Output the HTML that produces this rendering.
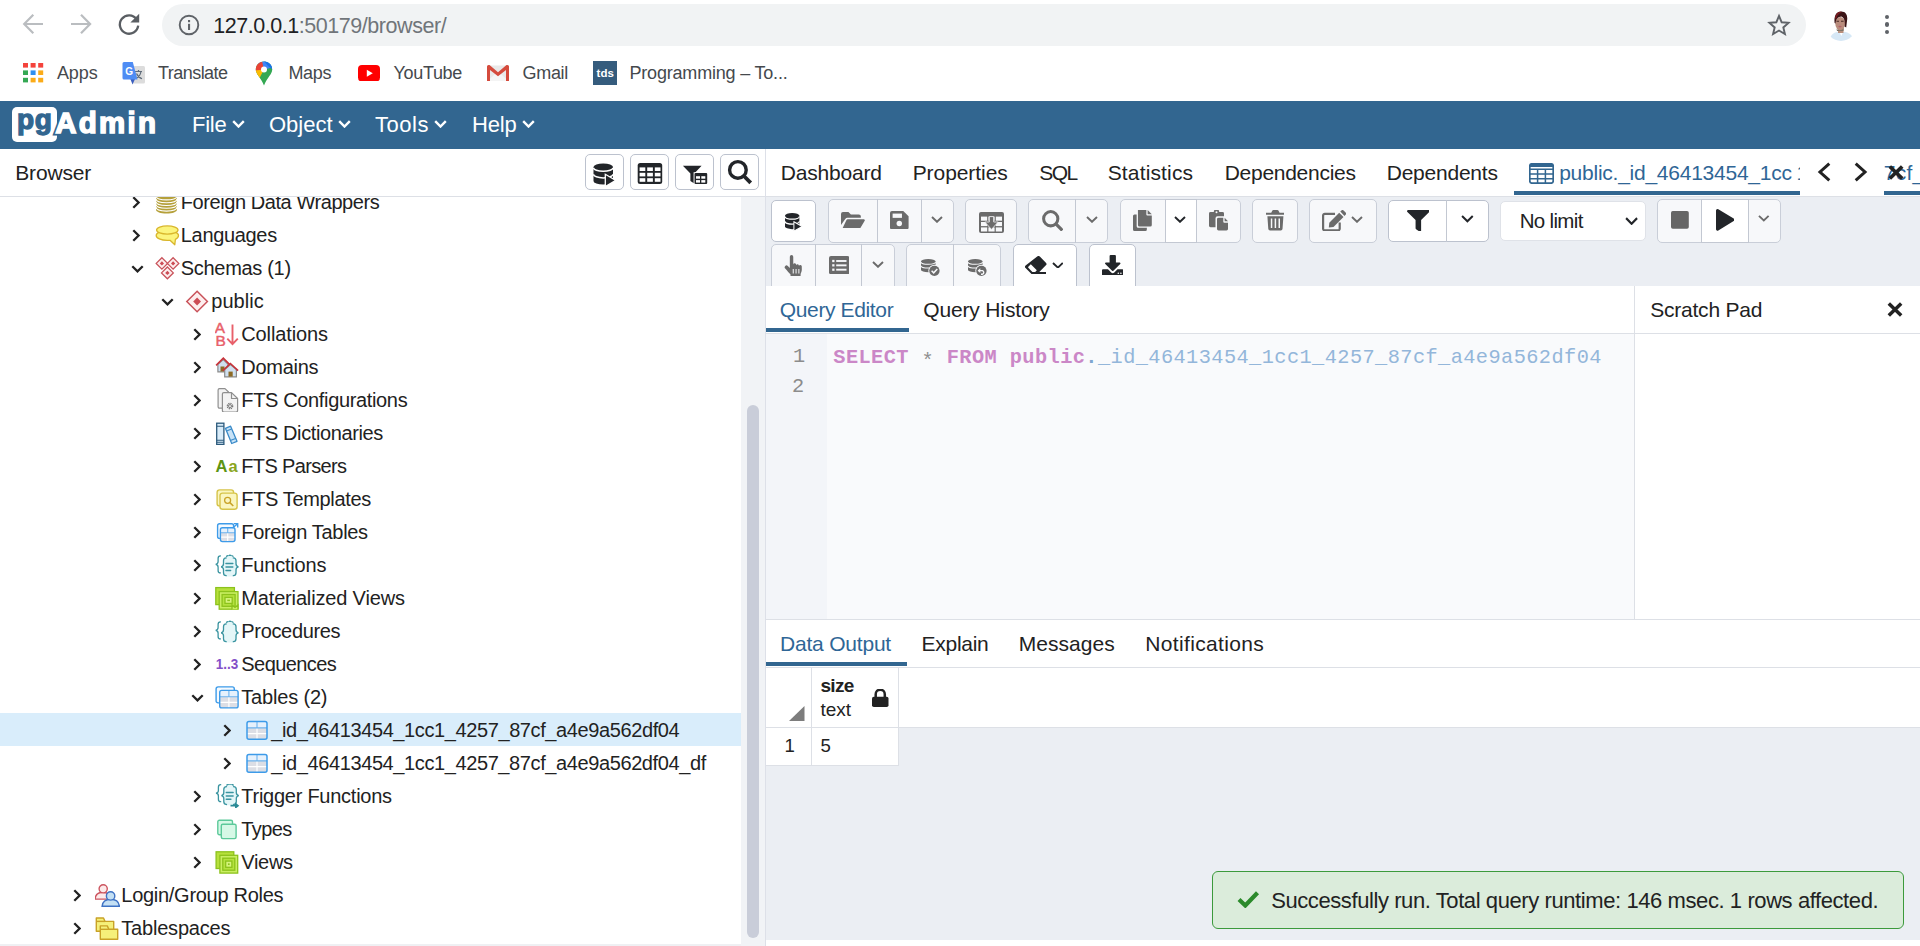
<!DOCTYPE html>
<html lang="en"><head><meta charset="utf-8"><title>pgAdmin 4</title>
<style>
html,body{margin:0;padding:0;background:#fff;}
body{width:1920px;height:946px;position:relative;overflow:hidden;font-family:"Liberation Sans",Arial,sans-serif;}
div,span.t,svg{position:absolute;box-sizing:border-box;}
span.t{white-space:pre;}
.btn{border:1px solid #bcc2ce;border-radius:5px;background:#fff;}
.dis{background:#f7f8fa;border-color:#c9ced8;}
</style></head>
<body>
<svg style="left:21px;top:12.3px;" width="24" height="24" viewBox="0 0 24 24"><path d="M22 12H4M12.300 2.800L3.200 12L12.300 21.200" fill="none" stroke="#babdc0" stroke-width="2.2"/></svg>
<svg style="left:68px;top:12.3px;" width="24" height="24" viewBox="0 0 24 24"><path d="M3 12H21.300M13 2.800L22.100 12L13 21.200" fill="none" stroke="#babdc0" stroke-width="2.2"/></svg>
<svg style="left:116.4px;top:11.2px;" width="26" height="26" viewBox="0 0 26 26"><path d="M20.6 8.2A9.2 9.2 0 1 0 22.2 14.6" fill="none" stroke="#5a5e63" stroke-width="2.3"/><path d="M23.200 2.800V11.600H14.400Z" fill="#5a5e63"/></svg>
<div style="left:162px;top:4px;width:1644px;height:42px;background:#f1f3f4;border-radius:21px;"></div>
<svg style="left:178px;top:14px;" width="22" height="22" viewBox="0 0 22 22"><circle cx="11" cy="11" r="9.3" fill="none" stroke="#5f6368" stroke-width="1.9"/><rect x="10" y="9.8" width="2.1" height="6.2" fill="#5f6368"/><rect x="10" y="6" width="2.1" height="2.2" fill="#5f6368"/></svg>
<span class="t" style="left:213.2px;top:11.55px;font-size:21.5px;line-height:28px;color:#70757a;font-weight:normal;font-family:'Liberation Sans', Arial, sans-serif;letter-spacing:-0.452px;"><span style="color:#202124">127.0.0.1</span>:50179/browser/</span>
<svg style="left:1767px;top:12.9px;" width="24" height="24" viewBox="0 0 26 26"><path d="M13 3.2L15.9 10.1L23.3 10.7L17.7 15.6L19.4 22.8L13 19L6.6 22.8L8.3 15.6L2.7 10.7L10.1 10.1Z" fill="none" stroke="#5f6368" stroke-width="2.1" stroke-linejoin="miter"/></svg>
<svg style="left:1826px;top:10px;" width="30" height="32" viewBox="0 0 30 32"><defs><clipPath id="av"><circle cx="15" cy="16" r="15"/></clipPath></defs><g clip-path="url(#av)"><rect width="30" height="32" fill="#fff"/><path d="M3 32C4 24 9 21.5 15 21.5S27 24 28.500 32Z" fill="#d6e8f6"/><path d="M13 21L15.300 26L17.500 21Z" fill="#fff"/><rect x="12" y="17" width="5.5" height="6" fill="#b98f7c"/><ellipse cx="14.2" cy="13.5" rx="4.9" ry="6.6" fill="#b98c7c"/><path d="M10.500 11.200H13M15 11.200H17.600" stroke="#4a2a26" stroke-width="1.100"/><ellipse cx="14" cy="16.600" rx="1.700" ry="0.800" fill="#b0606a"/><path d="M10.500 18.500C12 20.800 16 20.800 17.800 18L17.500 21H11Z" fill="#7d7468"/><path d="M8.6 13C7.500 4 12 0.800 15.500 1.500C20 1.500 22 5.500 21 11L20.200 17.500L18.600 16.500C19.500 11 18 7.500 15.500 6.500C12 7 10 8.500 9.600 13.500Z" fill="#3a1416"/><path d="M9 8C10 3 13 1.200 16 2C13.500 3 11 5 10.200 9Z" fill="#7a1c22"/></g></svg>
<div style="left:1884.6px;top:14.599999999999998px;width:4.6px;height:4.6px;background:#5f6368;border-radius:50%;"></div>
<div style="left:1884.6px;top:22.3px;width:4.6px;height:4.6px;background:#5f6368;border-radius:50%;"></div>
<div style="left:1884.6px;top:29.900000000000002px;width:4.6px;height:4.6px;background:#5f6368;border-radius:50%;"></div>
<svg style="left:23px;top:62.5px;" width="21" height="20" viewBox="0 0 21 20"><rect x="0.0" y="0.0" width="5" height="4.6" fill="#f4433c"/><rect x="7.6" y="0.0" width="5" height="4.6" fill="#f4433c"/><rect x="15.2" y="0.0" width="5" height="4.6" fill="#f4433c"/><rect x="0.0" y="7.4" width="5" height="4.6" fill="#34a853"/><rect x="7.6" y="7.4" width="5" height="4.6" fill="#2f8ff0"/><rect x="15.2" y="7.4" width="5" height="4.6" fill="#fbab18"/><rect x="0.0" y="14.8" width="5" height="4.6" fill="#34a853"/><rect x="7.6" y="14.8" width="5" height="4.6" fill="#fbab18"/><rect x="15.2" y="14.8" width="5" height="4.6" fill="#fbab18"/></svg>
<span class="t" style="left:57px;top:61.56px;font-size:18px;line-height:23px;color:#45494d;font-weight:normal;font-family:'Liberation Sans', Arial, sans-serif;letter-spacing:-0.133px;">Apps</span>
<svg style="left:122px;top:61px;" width="24" height="24" viewBox="0 0 24 24"><rect x="10" y="5" width="13" height="17.500" rx="1.5" fill="#dcdcdc"/><path d="M13 10.500H20M16.500 9V10.500M14 17.500C17 16 18.500 13.500 19 10.500M14.500 12.500C15.500 15 17.500 16.800 20 17.800" fill="none" stroke="#5f6b7a" stroke-width="1.2"/><path d="M8 17L10.500 23.500L13.500 17Z" fill="#3b5fc0"/><path d="M2 1H10.800L15.500 18.500H2A1.500 1.500 0 0 1 0.500 17V2.500A1.500 1.500 0 0 1 2 1Z" fill="#4e8cf4"/><text x="3.300" y="13.600" font-family="Liberation Sans, sans-serif" font-weight="bold" font-size="10" fill="#fff">G</text></svg>
<span class="t" style="left:158px;top:61.56px;font-size:18px;line-height:23px;color:#45494d;font-weight:normal;font-family:'Liberation Sans', Arial, sans-serif;letter-spacing:-0.542px;">Translate</span>
<svg style="left:255px;top:60.5px;" width="18" height="25" viewBox="0 0 18 25"><defs><clipPath id="pin"><path d="M9 0.500C4 0.500 0.800 4.200 0.800 8.600C0.800 13.500 5.500 16 9 24.500C12.500 16 17.200 13.500 17.200 8.600C17.200 4.200 14 0.500 9 0.500Z"/></clipPath></defs><g clip-path="url(#pin)"><rect width="18" height="25" fill="#34a853"/><path d="M0 0H18V6L9 9Z" fill="#4285f4"/><path d="M0 0H7L9 9L0 11Z" fill="#ea4335"/><path d="M0 9.500L9 8.500L4 18L0 16Z" fill="#fbbc04"/><path d="M9 0H18V9L13 5Z" fill="#1a73e8"/></g><circle cx="9" cy="8.400" r="3" fill="#fff"/></svg>
<span class="t" style="left:288.5px;top:61.56px;font-size:18px;line-height:23px;color:#45494d;font-weight:normal;font-family:'Liberation Sans', Arial, sans-serif;letter-spacing:-0.379px;">Maps</span>
<svg style="left:358px;top:64.5px;" width="22" height="16.5" viewBox="0 0 22 16.5"><rect width="22" height="16.500" rx="4" fill="#ff0000"/><path d="M8.800 4.700L14.800 8.250L8.800 11.800Z" fill="#fff"/></svg>
<span class="t" style="left:393.5px;top:61.56px;font-size:18px;line-height:23px;color:#45494d;font-weight:normal;font-family:'Liberation Sans', Arial, sans-serif;letter-spacing:-0.319px;">YouTube</span>
<svg style="left:487px;top:65px;" width="22" height="16" viewBox="0 0 22 16"><rect x="1" y="0.500" width="20" height="15" fill="#e9e9e9"/><path d="M1.500 15L11 6.500L20.500 15Z" fill="#f5f5f5"/><path d="M0 1.500A1.500 1.500 0 0 1 1.500 0H2.500L11 7.200L19.500 0H20.500A1.500 1.500 0 0 1 22 1.500V16H19V5L11 11.300L3 5V16H0Z" fill="#d54b3d"/></svg>
<span class="t" style="left:522.5px;top:61.56px;font-size:18px;line-height:23px;color:#45494d;font-weight:normal;font-family:'Liberation Sans', Arial, sans-serif;letter-spacing:-0.303px;">Gmail</span>
<div style="left:593px;top:61px;width:24px;height:24px;background:#355c7d;"></div>
<span class="t" style="left:596.6px;top:65.52px;font-size:11.5px;line-height:15px;color:#fff;font-weight:bold;font-family:'Liberation Sans', Arial, sans-serif;letter-spacing:0.083px;">tds</span>
<span class="t" style="left:629.5px;top:61.56px;font-size:18px;line-height:23px;color:#45494d;font-weight:normal;font-family:'Liberation Sans', Arial, sans-serif;letter-spacing:-0.197px;">Programming – To...</span>
<div style="left:0px;top:101px;width:1920px;height:48px;background:#326690;"></div>
<div style="left:12px;top:107px;width:45px;height:34.6px;background:#fff;border-radius:5px;"></div>
<span class="t" style="left:17px;top:101.90px;font-size:28px;line-height:36px;color:#326690;font-weight:bold;font-family:'Liberation Sans', Arial, sans-serif;letter-spacing:0.641px;-webkit-text-stroke:1.3px #326690">pg</span>
<span class="t" style="left:55.2px;top:104.01px;font-size:29.4px;line-height:38px;color:#326690;font-weight:bold;font-family:'Liberation Sans', Arial, sans-serif;letter-spacing:2.312px;-webkit-text-stroke:5px #326690">Admin</span>
<span class="t" style="left:55.2px;top:104.01px;font-size:29.4px;line-height:38px;color:#fff;font-weight:bold;font-family:'Liberation Sans', Arial, sans-serif;letter-spacing:2.312px;-webkit-text-stroke:1.5px #fff">Admin</span>
<span class="t" style="left:192px;top:109.58px;font-size:22px;line-height:29px;color:#fff;font-weight:normal;font-family:'Liberation Sans', Arial, sans-serif;letter-spacing:-0.238px;">File</span>
<svg style="left:232px;top:119.6px;" width="13" height="8.5" viewBox="0 0 13 8.5"><path d="M1.200 1.200L6.500 6.500L11.800 1.200" fill="none" stroke="#fff" stroke-width="2.4"/></svg>
<span class="t" style="left:269px;top:109.58px;font-size:22px;line-height:29px;color:#fff;font-weight:normal;font-family:'Liberation Sans', Arial, sans-serif;letter-spacing:-0.016px;">Object</span>
<svg style="left:338px;top:119.6px;" width="13" height="8.5" viewBox="0 0 13 8.5"><path d="M1.200 1.200L6.500 6.500L11.800 1.200" fill="none" stroke="#fff" stroke-width="2.4"/></svg>
<span class="t" style="left:375px;top:109.58px;font-size:22px;line-height:29px;color:#fff;font-weight:normal;font-family:'Liberation Sans', Arial, sans-serif;letter-spacing:0.528px;">Tools</span>
<svg style="left:434px;top:119.6px;" width="13" height="8.5" viewBox="0 0 13 8.5"><path d="M1.200 1.200L6.500 6.500L11.800 1.200" fill="none" stroke="#fff" stroke-width="2.4"/></svg>
<span class="t" style="left:472px;top:109.58px;font-size:22px;line-height:29px;color:#fff;font-weight:normal;font-family:'Liberation Sans', Arial, sans-serif;letter-spacing:-0.188px;">Help</span>
<svg style="left:522px;top:119.6px;" width="13" height="8.5" viewBox="0 0 13 8.5"><path d="M1.200 1.200L6.500 6.500L11.800 1.200" fill="none" stroke="#fff" stroke-width="2.4"/></svg>
<span class="t" style="left:15.2px;top:158.82px;font-size:21px;line-height:27px;color:#222;font-weight:normal;font-family:'Liberation Sans', Arial, sans-serif;letter-spacing:-0.147px;">Browser</span>
<div class="btn" style="left:585px;top:154px;width:39px;height:36px;"></div>
<svg style="left:591.5px;top:157px;" width="26" height="30" viewBox="0 0 26 30"><g transform="translate(1.500 6.400)"><path d="M0 3.604V17.596A9.75 3.604 0 0 0 19.5 17.596V3.604Z" fill="#222529"/><ellipse cx="9.75" cy="3.604" rx="9.75" ry="3.604" fill="#222529"/><path d="M0 4.304A9.75 3.604 0 0 0 19.5 4.304M0 10.918A9.75 3.604 0 0 0 19.5 10.918" fill="none" stroke="#fff" stroke-width="1.59"/></g><path d="M13.300 17.300L23.800 23.400L13.300 29.600Z" fill="#222529" stroke="#fff" stroke-width="1.300"/></svg>
<div class="btn" style="left:630px;top:154px;width:39px;height:36px;"></div>
<svg style="left:636.5px;top:157px;" width="26" height="30" viewBox="0 0 26 30"><rect x="0.700" y="5.900" width="24.500" height="21" rx="2.500" fill="#222529"/><rect x="2.6" y="10.4" width="5.700" height="3.600" fill="#fff"/><rect x="10.2" y="10.4" width="5.700" height="3.600" fill="#fff"/><rect x="17.8" y="10.4" width="5.700" height="3.600" fill="#fff"/><rect x="2.6" y="15.8" width="5.700" height="3.600" fill="#fff"/><rect x="10.2" y="15.8" width="5.700" height="3.600" fill="#fff"/><rect x="17.8" y="15.8" width="5.700" height="3.600" fill="#fff"/><rect x="2.6" y="21.2" width="5.700" height="3.600" fill="#fff"/><rect x="10.2" y="21.2" width="5.700" height="3.600" fill="#fff"/><rect x="17.8" y="21.2" width="5.700" height="3.600" fill="#fff"/></svg>
<div class="btn" style="left:675px;top:154px;width:39px;height:36px;"></div>
<svg style="left:681.5px;top:157px;" width="26" height="30" viewBox="0 0 26 30"><path d="M0.900 8.800H19.600L12.300 16.400V26.600L8.400 24V16.400Z" fill="#222529"/><rect x="11.600" y="15.200" width="13.700" height="11.800" fill="#fff"/><rect x="12.500" y="16" width="12.700" height="10.900" rx="1" fill="#222529"/><rect x="14.0" y="19.2" width="4" height="2.500" fill="#fff"/><rect x="19.3" y="19.2" width="4" height="2.500" fill="#fff"/><rect x="14.0" y="23.1" width="4" height="2.500" fill="#fff"/><rect x="19.3" y="23.1" width="4" height="2.500" fill="#fff"/></svg>
<div class="btn" style="left:720px;top:154px;width:39px;height:36px;"></div>
<svg style="left:726.5px;top:157px;" width="26" height="30" viewBox="0 0 26 30"><circle cx="10.900" cy="12.900" r="8.300" fill="none" stroke="#222529" stroke-width="3.400"/><path d="M16.900 19L23.700 25.800" stroke="#222529" stroke-width="3.800"/></svg>
<div style="left:0px;top:196px;width:766px;height:1px;background:#dde0e6;"></div>
<div style="left:0;top:197px;width:741px;height:747px;overflow:hidden;">
<svg style="left:132.4px;top:-0.6999999999999993px;" width="8.5" height="13" viewBox="0 0 8.5 13"><path d="M1.300 1.300L6.600 6.500L1.300 11.700" fill="none" stroke="#222" stroke-width="2.3"/></svg>
<svg style="left:154.5px;top:-7.5px;" width="25" height="24" viewBox="0 0 25 24"><path d="M1 6.500V19.500C1 22 5.500 23.500 11.500 23.500S22 22 22 19.500V6.500C22 4 17.500 2.500 11.500 2.500S1 4 1 6.500Z" fill="#b5a03a"/><path d="M1 5.9C1 8.5 5.500 9.9 11.500 9.9S22 8.5 22 5.9" fill="none" stroke="#fff" stroke-width="1.1"/><path d="M1 8.7C1 11.299999999999999 5.500 12.7 11.500 12.7S22 11.299999999999999 22 8.7" fill="none" stroke="#fff" stroke-width="1.1"/><path d="M1 11.5C1 14.1 5.500 15.5 11.500 15.5S22 14.1 22 11.5" fill="none" stroke="#fff" stroke-width="1.1"/><path d="M1 14.3C1 16.900000000000002 5.500 18.3 11.500 18.3S22 16.900000000000002 22 14.3" fill="none" stroke="#fff" stroke-width="1.1"/><path d="M1 17.1C1 19.700000000000003 5.500 21.1 11.500 21.1S22 19.700000000000003 22 17.1" fill="none" stroke="#fff" stroke-width="1.1"/></svg>
<span class="t" style="left:180.8px;top:-7.93px;font-size:20px;line-height:26px;color:#222;font-weight:normal;font-family:'Liberation Sans', Arial, sans-serif;letter-spacing:-0.429px;">Foreign Data Wrappers</span>
<svg style="left:132.4px;top:32.3px;" width="8.5" height="13" viewBox="0 0 8.5 13"><path d="M1.300 1.300L6.600 6.500L1.300 11.700" fill="none" stroke="#222" stroke-width="2.3"/></svg>
<svg style="left:154.5px;top:25.5px;" width="25" height="24" viewBox="0 0 25 24"><g fill="#fbf47c" stroke="#d9b62c" stroke-width="1.3" stroke-linejoin="round"><path d="M1.200 12.400C1.200 9.800 6 7.800 12.200 7.800S23.500 9.800 23.500 12.400C23.500 14.200 22 15.500 20.400 16.300L19.800 21.800L15 17.300C14 17.400 13 17.400 12.200 17.400C6 17.400 1.200 15.200 1.200 12.400Z"/><ellipse cx="12.300" cy="7" rx="10.700" ry="4.100"/></g></svg>
<span class="t" style="left:180.8px;top:25.07px;font-size:20px;line-height:26px;color:#222;font-weight:normal;font-family:'Liberation Sans', Arial, sans-serif;letter-spacing:-0.332px;">Languages</span>
<svg style="left:130.6px;top:67.9px;" width="13" height="8.5" viewBox="0 0 13 8.5"><path d="M1.300 1.300L6.500 6.400L11.700 1.300" fill="none" stroke="#222" stroke-width="2.3"/></svg>
<svg style="left:154.5px;top:58.5px;" width="25" height="24" viewBox="0 0 25 24"><path d="M6.9 1.7000000000000002L12.600000000000001 7.4L6.9 13.100000000000001L1.2000000000000002 7.4Z" fill="#fdeeee" stroke="#c9525a" stroke-width="1.3"/><path d="M6.9 5.300000000000001L9.0 7.4L6.9 9.5L4.800000000000001 7.4Z" fill="#cc4c55"/><path d="M18.1 1.7000000000000002L23.8 7.4L18.1 13.100000000000001L12.400000000000002 7.4Z" fill="#fdeeee" stroke="#c9525a" stroke-width="1.3"/><path d="M18.1 5.300000000000001L20.200000000000003 7.4L18.1 9.5L16.0 7.4Z" fill="#cc4c55"/><path d="M12.4 10.999999999999998L18.3 16.9L12.4 22.799999999999997L6.5 16.9Z" fill="#fdeeee" stroke="#c9525a" stroke-width="1.3"/><path d="M12.4 14.7L14.600000000000001 16.9L12.4 19.099999999999998L10.2 16.9Z" fill="#cc4c55"/></svg>
<span class="t" style="left:180.8px;top:58.07px;font-size:20px;line-height:26px;color:#222;font-weight:normal;font-family:'Liberation Sans', Arial, sans-serif;letter-spacing:-0.307px;">Schemas (1)</span>
<svg style="left:161.1px;top:100.9px;" width="13" height="8.5" viewBox="0 0 13 8.5"><path d="M1.300 1.300L6.500 6.400L11.700 1.300" fill="none" stroke="#222" stroke-width="2.3"/></svg>
<svg style="left:185.0px;top:91.5px;" width="25" height="24" viewBox="0 0 25 24"><path d="M12.1 2.1999999999999993L22.4 12.5L12.1 22.8L1.799999999999999 12.5Z" fill="#fdeeee" stroke="#c9525a" stroke-width="1.5"/><path d="M12.1 8.6L16.0 12.5L12.1 16.4L8.2 12.5Z" fill="#cc4c55"/></svg>
<span class="t" style="left:211.3px;top:91.07px;font-size:20px;line-height:26px;color:#222;font-weight:normal;font-family:'Liberation Sans', Arial, sans-serif;letter-spacing:0.039px;">public</span>
<svg style="left:192.9px;top:131.3px;" width="8.5" height="13" viewBox="0 0 8.5 13"><path d="M1.300 1.300L6.600 6.500L1.300 11.700" fill="none" stroke="#222" stroke-width="2.3"/></svg>
<svg style="left:215.0px;top:124.5px;" width="25" height="24" viewBox="0 0 25 24"><g font-family="Liberation Sans, sans-serif" font-size="15.400" fill="#e8606a" stroke="#e8606a" stroke-width="0.450"><text x="-0.300" y="10.500">A</text><text x="0.500" y="23.500">B</text></g><path d="M17.500 2.600V22M12.300 16.600L17.500 22.200L22.800 16.600" fill="none" stroke="#e8606a" stroke-width="1.900"/></svg>
<span class="t" style="left:241.3px;top:124.07px;font-size:20px;line-height:26px;color:#222;font-weight:normal;font-family:'Liberation Sans', Arial, sans-serif;letter-spacing:-0.133px;">Collations</span>
<svg style="left:192.9px;top:164.3px;" width="8.5" height="13" viewBox="0 0 8.5 13"><path d="M1.300 1.300L6.600 6.500L1.300 11.700" fill="none" stroke="#222" stroke-width="2.3"/></svg>
<svg style="left:215.0px;top:157.5px;" width="25" height="24" viewBox="0 0 25 24"><path d="M2.900 9.200V16.800H12.900V9.200L8.300 4.500Z" fill="#cfe0f0" stroke="#8a8a8a" stroke-width="1.200"/><rect x="5.500" y="11.500" width="4" height="5" fill="#8d6a26"/><path d="M1.100 10.400L8.300 3.200L15.500 10.400" fill="none" stroke="#c8323a" stroke-width="1.600"/><path d="M9.700 14.500V21.800H21.400V14.500L15.400 9.500Z" fill="#cfe0f0" stroke="#8a8a8a" stroke-width="1.200"/><rect x="13.500" y="16.600" width="4.200" height="5" fill="#8d6a26"/><path d="M7.900 15.600L15.400 8.500L23.100 15.600" fill="none" stroke="#c8323a" stroke-width="1.600"/></svg>
<span class="t" style="left:241.3px;top:157.07px;font-size:20px;line-height:26px;color:#222;font-weight:normal;font-family:'Liberation Sans', Arial, sans-serif;letter-spacing:-0.275px;">Domains</span>
<svg style="left:192.9px;top:197.3px;" width="8.5" height="13" viewBox="0 0 8.5 13"><path d="M1.300 1.300L6.600 6.500L1.300 11.700" fill="none" stroke="#222" stroke-width="2.3"/></svg>
<svg style="left:215.0px;top:190.5px;" width="25" height="24" viewBox="0 0 25 24"><g fill="#f3f3f3" stroke="#8f8f8f" stroke-width="1.200" stroke-linejoin="round"><path d="M4.500 0.600H10L13.500 4V20.200H4.500A1.400 1.400 0 0 1 3.100 18.800V2A1.400 1.400 0 0 1 4.500 0.600Z"/><path d="M8.800 4.600H16.500L22.600 10.500V22.600A1.400 1.400 0 0 1 21.200 24H8.800A1.400 1.400 0 0 1 7.400 22.600V6A1.400 1.400 0 0 1 8.800 4.600Z"/><path d="M16.500 4.600V10.500H22.600" fill="none"/></g><circle cx="15" cy="18.100" r="2.600" fill="none" stroke="#777" stroke-width="1.500" stroke-dasharray="1.200 0.850"/><circle cx="15" cy="18.100" r="1.500" fill="none" stroke="#777" stroke-width="0.900"/></svg>
<span class="t" style="left:241.3px;top:190.07px;font-size:20px;line-height:26px;color:#222;font-weight:normal;font-family:'Liberation Sans', Arial, sans-serif;letter-spacing:-0.350px;">FTS Configurations</span>
<svg style="left:192.9px;top:230.3px;" width="8.5" height="13" viewBox="0 0 8.5 13"><path d="M1.300 1.300L6.600 6.500L1.300 11.700" fill="none" stroke="#222" stroke-width="2.3"/></svg>
<svg style="left:215.0px;top:223.5px;" width="25" height="24" viewBox="0 0 25 24"><rect x="1.700" y="2.200" width="7.200" height="21.200" fill="#d9ecf9" stroke="#2c5a7c" stroke-width="1.300"/><path d="M1.700 5.200H8.900M1.700 19.200H8.900M1.700 21.300H8.900" stroke="#2c5a7c" stroke-width="1.100"/><path d="M10.400 7.300L15.600 5.200L22 20.300L16.700 22.500Z" fill="#c9e3f7" stroke="#3a8bc9" stroke-width="1.300" stroke-linejoin="round"/><path d="M11.500 10L16.700 7.900M15.300 19.600L20.600 17.400" stroke="#3a8bc9" stroke-width="1.100"/></svg>
<span class="t" style="left:241.3px;top:223.07px;font-size:20px;line-height:26px;color:#222;font-weight:normal;font-family:'Liberation Sans', Arial, sans-serif;letter-spacing:-0.395px;">FTS Dictionaries</span>
<svg style="left:192.9px;top:263.3px;" width="8.5" height="13" viewBox="0 0 8.5 13"><path d="M1.300 1.300L6.600 6.500L1.300 11.700" fill="none" stroke="#222" stroke-width="2.3"/></svg>
<svg style="left:215.0px;top:256.5px;" width="25" height="24" viewBox="0 0 25 24"><g font-family="Liberation Sans, sans-serif" font-weight="bold" font-size="16.500"><text x="0.400" y="18.400" fill="#5c9414">A</text><text x="13.400" y="18.400" fill="#8aa520">a</text></g></svg>
<span class="t" style="left:241.3px;top:256.07px;font-size:20px;line-height:26px;color:#222;font-weight:normal;font-family:'Liberation Sans', Arial, sans-serif;letter-spacing:-0.659px;">FTS Parsers</span>
<svg style="left:192.9px;top:296.3px;" width="8.5" height="13" viewBox="0 0 8.5 13"><path d="M1.300 1.300L6.600 6.500L1.300 11.700" fill="none" stroke="#222" stroke-width="2.3"/></svg>
<svg style="left:215.0px;top:289.5px;" width="25" height="24" viewBox="0 0 25 24"><g fill="#faf6c0" stroke="#d6c44a" stroke-width="1.400"><rect x="2.100" y="2.900" width="16.500" height="16" rx="2.500"/><rect x="5" y="6.100" width="17.100" height="16.100" rx="2.500"/></g><circle cx="12.600" cy="13.300" r="3" fill="none" stroke="#c9a227" stroke-width="1.300"/><path d="M14.900 15.600L18.300 19" stroke="#c9a227" stroke-width="1.500"/></svg>
<span class="t" style="left:241.3px;top:289.07px;font-size:20px;line-height:26px;color:#222;font-weight:normal;font-family:'Liberation Sans', Arial, sans-serif;letter-spacing:-0.356px;">FTS Templates</span>
<svg style="left:192.9px;top:329.3px;" width="8.5" height="13" viewBox="0 0 8.5 13"><path d="M1.300 1.300L6.600 6.500L1.300 11.700" fill="none" stroke="#222" stroke-width="2.3"/></svg>
<svg style="left:215.0px;top:322.5px;" width="25" height="24" viewBox="0 0 25 24"><rect x="2.600" y="3.800" width="16" height="14.600" rx="2" fill="#f6fafe" stroke="#3d9be9" stroke-width="1.400"/><rect x="5.4" y="7.8" width="14.6" height="13.8" rx="2" fill="#dcdee5"/><path d="M5.4 12.768V9.8A2 2 0 0 1 7.4 7.8H18.0A2 2 0 0 1 20.0 9.8V12.768Z" fill="#e6f1fc"/><path d="M12.7 12.768V21.6M5.4 17.184H20.0" stroke="#fff" stroke-width="1.200"/><path d="M12.7 7.8V12.768M5.4 12.768H20.0" stroke="#6db3ee" stroke-width="1.100"/><rect x="5.4" y="7.8" width="14.6" height="13.8" rx="2" fill="none" stroke="#3d9be9" stroke-width="1.4"/><path d="M17.500 8L22.400 4M18.800 3.600H22.700V7.400" fill="none" stroke="#3d9be9" stroke-width="1.400"/></svg>
<span class="t" style="left:241.3px;top:322.07px;font-size:20px;line-height:26px;color:#222;font-weight:normal;font-family:'Liberation Sans', Arial, sans-serif;letter-spacing:-0.309px;">Foreign Tables</span>
<svg style="left:192.9px;top:362.3px;" width="8.5" height="13" viewBox="0 0 8.5 13"><path d="M1.300 1.300L6.600 6.500L1.300 11.700" fill="none" stroke="#222" stroke-width="2.3"/></svg>
<svg style="left:215.0px;top:355.5px;" width="25" height="24" viewBox="0 0 25 24"><g transform="translate(0.0 0.0)"><path d="M11 4C8.500 4.600 8 6 8 8V10.600C8 12.500 7.200 13.500 6 13.800C7.200 14.100 8 15.100 8 17V19.600C8 21.600 8.500 23 11 23.400H18.500C21 23 21.500 21.600 21.500 19.600V17C21.500 15.100 22.300 14.100 23.500 13.800C22.300 13.500 21.500 12.500 21.500 10.600V8C21.500 6 21 4.600 18.500 4C16 2 13.500 2 11 4Z" fill="#e4f6f8"/><g fill="none" stroke="#3a94a0" stroke-width="1.300" stroke-linecap="round"><path d="M5.400 2.900C3.600 2.900 3.100 3.900 3.100 5.400V8.600C3.100 10.300 2.500 11.100 0.700 11.400C2.500 11.700 3.100 12.500 3.100 14.200V17.400C3.100 18.900 3.600 19.900 5.400 19.900"/><path d="M11.200 4.900C9.100 4.900 8.500 6 8.500 7.800V10.800C8.500 12.700 7.800 13.500 6.100 13.800C7.800 14.100 8.500 14.900 8.500 16.800V19.800C8.500 21.600 9.100 22.700 11.200 22.700"/><path d="M18.300 4.900C20.400 4.900 21 6 21 7.800V10.800C21 12.700 21.700 13.500 23.500 13.800C21.700 14.100 21 14.900 21 16.800V19.800C21 21.600 20.400 22.700 18.300 22.700"/><path d="M11.500 3.300C13.500 1.900 16 1.900 18 3.300" stroke-dasharray="1.600 1.300"/><path d="M11 10.600H17.800M11 14.100H17.800M11 17.500H15.600" stroke-width="1.500"/></g></g></svg>
<span class="t" style="left:241.3px;top:355.07px;font-size:20px;line-height:26px;color:#222;font-weight:normal;font-family:'Liberation Sans', Arial, sans-serif;letter-spacing:-0.191px;">Functions</span>
<svg style="left:192.9px;top:395.3px;" width="8.5" height="13" viewBox="0 0 8.5 13"><path d="M1.300 1.300L6.600 6.500L1.300 11.700" fill="none" stroke="#222" stroke-width="2.3"/></svg>
<svg style="left:215.0px;top:388.5px;" width="25" height="24" viewBox="0 0 25 24"><rect x="0.800" y="1.600" width="18.600" height="17" fill="#b7e03c" stroke="#8cc21c" stroke-width="1.300"/><rect x="4.2" y="5.6" width="18.8" height="17.6" fill="#c9ee62" stroke="#8cc21c" stroke-width="1.300"/><rect x="7.1" y="8.5" width="13.0" height="11.8" fill="#b4e23f" stroke="#8cc21c" stroke-width="1.300"/><rect x="10.0" y="11.4" width="7.2" height="6.0" fill="#d6f47e" stroke="#8cc21c" stroke-width="1.300"/><rect x="12.9" y="14.3" width="1.4" height="0.2" fill="#b4e23f" stroke="#8cc21c" stroke-width="1.300"/><path d="M17 23.300V19L20 21.500L23 19V23.300" fill="#c9ee62" stroke="#8cc21c" stroke-width="1.300"/></svg>
<span class="t" style="left:241.3px;top:388.07px;font-size:20px;line-height:26px;color:#222;font-weight:normal;font-family:'Liberation Sans', Arial, sans-serif;letter-spacing:-0.160px;">Materialized Views</span>
<svg style="left:192.9px;top:428.3px;" width="8.5" height="13" viewBox="0 0 8.5 13"><path d="M1.300 1.300L6.600 6.500L1.300 11.700" fill="none" stroke="#222" stroke-width="2.3"/></svg>
<svg style="left:215.0px;top:421.5px;" width="25" height="24" viewBox="0 0 25 24"><g transform="translate(0.0 0.0)"><path d="M11 4C8.500 4.600 8 6 8 8V10.600C8 12.500 7.200 13.500 6 13.800C7.200 14.100 8 15.100 8 17V19.600C8 21.600 8.500 23 11 23.400H18.500C21 23 21.500 21.600 21.500 19.600V17C21.500 15.100 22.300 14.100 23.500 13.800C22.300 13.500 21.500 12.500 21.500 10.600V8C21.500 6 21 4.600 18.500 4C16 2 13.500 2 11 4Z" fill="#e4f6f8"/><g fill="none" stroke="#3a94a0" stroke-width="1.300" stroke-linecap="round"><path d="M5.400 2.900C3.600 2.900 3.100 3.900 3.100 5.400V8.600C3.100 10.300 2.500 11.100 0.700 11.400C2.500 11.700 3.100 12.500 3.100 14.200V17.400C3.100 18.900 3.600 19.900 5.400 19.900"/><path d="M11.200 4.900C9.100 4.900 8.500 6 8.500 7.800V10.800C8.500 12.700 7.800 13.500 6.100 13.800C7.800 14.100 8.500 14.900 8.500 16.800V19.800C8.500 21.600 9.100 22.700 11.200 22.700"/><path d="M18.300 4.900C20.400 4.900 21 6 21 7.800V10.800C21 12.700 21.700 13.500 23.500 13.800C21.700 14.100 21 14.900 21 16.800V19.800C21 21.600 20.400 22.700 18.300 22.700"/><path d="M11.500 3.300C13.500 1.900 16 1.900 18 3.300" stroke-dasharray="1.600 1.300"/></g></g></svg>
<span class="t" style="left:241.3px;top:421.07px;font-size:20px;line-height:26px;color:#222;font-weight:normal;font-family:'Liberation Sans', Arial, sans-serif;letter-spacing:-0.328px;">Procedures</span>
<svg style="left:192.9px;top:461.3px;" width="8.5" height="13" viewBox="0 0 8.5 13"><path d="M1.300 1.300L6.600 6.500L1.300 11.700" fill="none" stroke="#222" stroke-width="2.3"/></svg>
<svg style="left:215.0px;top:454.5px;" width="25" height="24" viewBox="0 0 25 24"><text x="0.800" y="16.800" font-family="Liberation Sans, sans-serif" font-weight="bold" font-size="14" textLength="22.500" lengthAdjust="spacingAndGlyphs" fill="#8450c8">1..3</text></svg>
<span class="t" style="left:241.3px;top:454.07px;font-size:20px;line-height:26px;color:#222;font-weight:normal;font-family:'Liberation Sans', Arial, sans-serif;letter-spacing:-0.564px;">Sequences</span>
<svg style="left:191.1px;top:496.9px;" width="13" height="8.5" viewBox="0 0 13 8.5"><path d="M1.300 1.300L6.500 6.400L11.700 1.300" fill="none" stroke="#222" stroke-width="2.3"/></svg>
<svg style="left:215.0px;top:487.5px;" width="25" height="24" viewBox="0 0 25 24"><rect x="1.100" y="1.900" width="18.200" height="16" rx="2" fill="#f6fafe" stroke="#3d9be9" stroke-width="1.400"/><rect x="4.7" y="5.4" width="18.4" height="17.5" rx="2" fill="#dcdee5"/><path d="M4.7 11.7V7.4A2 2 0 0 1 6.7 5.4H21.099999999999998A2 2 0 0 1 23.099999999999998 7.4V11.7Z" fill="#e6f1fc"/><path d="M13.899999999999999 11.7V22.9M4.7 17.299999999999997H23.099999999999998" stroke="#fff" stroke-width="1.200"/><path d="M13.899999999999999 5.4V11.7M4.7 11.7H23.099999999999998" stroke="#6db3ee" stroke-width="1.100"/><rect x="4.7" y="5.4" width="18.4" height="17.5" rx="2" fill="none" stroke="#3d9be9" stroke-width="1.4"/></svg>
<span class="t" style="left:241.3px;top:487.07px;font-size:20px;line-height:26px;color:#222;font-weight:normal;font-family:'Liberation Sans', Arial, sans-serif;letter-spacing:-0.181px;">Tables (2)</span>
<div style="left:0px;top:516px;width:741px;height:33px;background:#d9edfb;"></div>
<svg style="left:222.9px;top:527.3px;" width="8.5" height="13" viewBox="0 0 8.5 13"><path d="M1.300 1.300L6.600 6.500L1.300 11.700" fill="none" stroke="#222" stroke-width="2.3"/></svg>
<svg style="left:245.0px;top:520.5px;" width="25" height="24" viewBox="0 0 25 24"><rect x="2" y="3.4" width="20" height="17.9" rx="2" fill="#dcdee5"/><path d="M2 9.844V5.4A2 2 0 0 1 4 3.4H20A2 2 0 0 1 22 5.4V9.844Z" fill="#e6f1fc"/><path d="M12.0 9.844V21.299999999999997M2 15.572H22" stroke="#fff" stroke-width="1.200"/><path d="M12.0 3.4V9.844M2 9.844H22" stroke="#6db3ee" stroke-width="1.100"/><rect x="2" y="3.4" width="20" height="17.9" rx="2" fill="none" stroke="#3d9be9" stroke-width="1.5"/></svg>
<span class="t" style="left:271.3px;top:520.07px;font-size:20px;line-height:26px;color:#222;font-weight:normal;font-family:'Liberation Sans', Arial, sans-serif;letter-spacing:-0.394px;">_id_46413454_1cc1_4257_87cf_a4e9a562df04</span>
<svg style="left:222.9px;top:560.3px;" width="8.5" height="13" viewBox="0 0 8.5 13"><path d="M1.300 1.300L6.600 6.500L1.300 11.700" fill="none" stroke="#222" stroke-width="2.3"/></svg>
<svg style="left:245.0px;top:553.5px;" width="25" height="24" viewBox="0 0 25 24"><rect x="2" y="3.4" width="20" height="17.9" rx="2" fill="#dcdee5"/><path d="M2 9.844V5.4A2 2 0 0 1 4 3.4H20A2 2 0 0 1 22 5.4V9.844Z" fill="#e6f1fc"/><path d="M12.0 9.844V21.299999999999997M2 15.572H22" stroke="#fff" stroke-width="1.200"/><path d="M12.0 3.4V9.844M2 9.844H22" stroke="#6db3ee" stroke-width="1.100"/><rect x="2" y="3.4" width="20" height="17.9" rx="2" fill="none" stroke="#3d9be9" stroke-width="1.5"/></svg>
<span class="t" style="left:271.3px;top:553.07px;font-size:20px;line-height:26px;color:#222;font-weight:normal;font-family:'Liberation Sans', Arial, sans-serif;letter-spacing:-0.396px;">_id_46413454_1cc1_4257_87cf_a4e9a562df04_df</span>
<svg style="left:192.9px;top:593.3px;" width="8.5" height="13" viewBox="0 0 8.5 13"><path d="M1.300 1.300L6.600 6.500L1.300 11.700" fill="none" stroke="#222" stroke-width="2.3"/></svg>
<svg style="left:215.0px;top:586.5px;" width="25" height="24" viewBox="0 0 25 24"><g transform="translate(0.3 -2.2)"><path d="M11 4C8.500 4.600 8 6 8 8V10.600C8 12.500 7.200 13.500 6 13.800C7.200 14.100 8 15.100 8 17V19.600C8 21.600 8.500 23 11 23.400H18.500C21 23 21.500 21.600 21.500 19.600V17C21.500 15.100 22.300 14.100 23.500 13.800C22.300 13.500 21.500 12.500 21.500 10.600V8C21.500 6 21 4.600 18.500 4C16 2 13.500 2 11 4Z" fill="#e4f6f8"/><g fill="none" stroke="#3a94a0" stroke-width="1.300" stroke-linecap="round"><path d="M5.400 2.900C3.600 2.900 3.100 3.900 3.100 5.400V8.600C3.100 10.300 2.500 11.100 0.700 11.400C2.500 11.700 3.100 12.500 3.100 14.200V17.400C3.100 18.900 3.600 19.900 5.400 19.900"/><path d="M11.200 4.900C9.100 4.900 8.500 6 8.500 7.800V10.800C8.500 12.700 7.800 13.500 6.100 13.800C7.800 14.100 8.500 14.900 8.500 16.800V19.800C8.500 21.600 9.100 22.700 11.200 22.700"/><path d="M18.300 4.900C20.400 4.900 21 6 21 7.800V10.800C21 12.700 21.700 13.500 23.500 13.800C21.700 14.100 21 14.900 21 16.800V19.800C21 21.600 20.400 22.700 18.300 22.700"/><path d="M11.500 3.300C13.500 1.900 16 1.900 18 3.300" stroke-dasharray="1.600 1.300"/><path d="M11 10.600H17.800M11 14.100H17.800M11 17.500H15.600" stroke-width="1.500"/></g></g><path d="M15.500 20.800H20V18.300L24.300 21.700L20 25.100V22.600H15.500Z" fill="#2a8a96"/></svg>
<span class="t" style="left:241.3px;top:586.07px;font-size:20px;line-height:26px;color:#222;font-weight:normal;font-family:'Liberation Sans', Arial, sans-serif;letter-spacing:-0.257px;">Trigger Functions</span>
<svg style="left:192.9px;top:626.3px;" width="8.5" height="13" viewBox="0 0 8.5 13"><path d="M1.300 1.300L6.600 6.500L1.300 11.700" fill="none" stroke="#222" stroke-width="2.3"/></svg>
<svg style="left:215.0px;top:619.5px;" width="25" height="24" viewBox="0 0 25 24"><g fill="#d6f8e6" stroke="#5cc99a" stroke-width="1.400"><rect x="2.800" y="3.300" width="14.700" height="14.500" rx="1.500"/><rect x="6.300" y="7.300" width="14.800" height="14.300" rx="1.500"/></g></svg>
<span class="t" style="left:241.3px;top:619.07px;font-size:20px;line-height:26px;color:#222;font-weight:normal;font-family:'Liberation Sans', Arial, sans-serif;letter-spacing:-0.572px;">Types</span>
<svg style="left:192.9px;top:659.3px;" width="8.5" height="13" viewBox="0 0 8.5 13"><path d="M1.300 1.300L6.600 6.500L1.300 11.700" fill="none" stroke="#222" stroke-width="2.3"/></svg>
<svg style="left:215.0px;top:652.5px;" width="25" height="24" viewBox="0 0 25 24"><rect x="1.100" y="1.800" width="17.700" height="16.700" fill="#b7e03c" stroke="#8cc21c" stroke-width="1.300"/><rect x="4.9" y="5.3" width="17.8" height="17.8" fill="#c9ee62" stroke="#8cc21c" stroke-width="1.300"/><rect x="7.8" y="8.2" width="12.0" height="12.0" fill="#b4e23f" stroke="#8cc21c" stroke-width="1.300"/><rect x="10.7" y="11.1" width="6.2" height="6.2" fill="#d6f47e" stroke="#8cc21c" stroke-width="1.300"/><rect x="13.6" y="14.0" width="0.4" height="0.4" fill="#a9d934" stroke="#8cc21c" stroke-width="1.300"/></svg>
<span class="t" style="left:241.3px;top:652.07px;font-size:20px;line-height:26px;color:#222;font-weight:normal;font-family:'Liberation Sans', Arial, sans-serif;letter-spacing:-0.300px;">Views</span>
<svg style="left:72.9px;top:692.3px;" width="8.5" height="13" viewBox="0 0 8.5 13"><path d="M1.300 1.300L6.600 6.500L1.300 11.700" fill="none" stroke="#222" stroke-width="2.3"/></svg>
<svg style="left:95.0px;top:685.5px;" width="25" height="24" viewBox="0 0 25 24"><g fill="#fdeaea" stroke="#cc5560" stroke-width="1.400"><path d="M0 16.100C0.500 11.500 3.500 9.300 7.800 9.300S15 11.500 15.500 16.100Z"/><circle cx="8.200" cy="5.800" r="4.100"/></g><g fill="#c4e0f4" stroke="#3e72c4" stroke-width="1.400"><path d="M7.100 23.300C7.600 18.700 11 16.300 15.600 16.300S23.900 18.700 24.400 23.300Z"/><circle cx="15.600" cy="12.900" r="4.200"/></g></svg>
<span class="t" style="left:121.3px;top:685.07px;font-size:20px;line-height:26px;color:#222;font-weight:normal;font-family:'Liberation Sans', Arial, sans-serif;letter-spacing:-0.281px;">Login/Group Roles</span>
<svg style="left:72.9px;top:725.3px;" width="8.5" height="13" viewBox="0 0 8.5 13"><path d="M1.300 1.300L6.600 6.500L1.300 11.700" fill="none" stroke="#222" stroke-width="2.3"/></svg>
<svg style="left:95.0px;top:718.5px;" width="25" height="24" viewBox="0 0 25 24"><g fill="#f5f07a" stroke="#c9a227" stroke-width="1.400" stroke-linejoin="round"><path d="M1.300 15.300V2H8.500L10 5.400H18.700V15.300Z"/><path d="M1.300 5.400H10"/><path d="M5.300 23.200V9.900H12.300L13.800 13.300H22.700V23.200Z"/><path d="M5.300 13.300H13.800"/></g></svg>
<span class="t" style="left:121.3px;top:718.07px;font-size:20px;line-height:26px;color:#222;font-weight:normal;font-family:'Liberation Sans', Arial, sans-serif;letter-spacing:-0.199px;">Tablespaces</span>
</div>
<div style="left:741px;top:197px;width:24px;height:749px;background:#f1f3f6;"></div>
<div style="left:747px;top:404.5px;width:12px;height:533px;background:#c9cdd9;border-radius:6px;"></div>
<div style="left:765px;top:149px;width:1px;height:797px;background:#dde0e8;"></div>
<div style="left:0px;top:944px;width:741px;height:2px;background:#eff0f3;"></div>
<span class="t" style="left:780.7px;top:158.82px;font-size:21px;line-height:27px;color:#222;font-weight:normal;font-family:'Liberation Sans', Arial, sans-serif;letter-spacing:-0.193px;">Dashboard</span>
<span class="t" style="left:912.7px;top:158.82px;font-size:21px;line-height:27px;color:#222;font-weight:normal;font-family:'Liberation Sans', Arial, sans-serif;letter-spacing:-0.072px;">Properties</span>
<span class="t" style="left:1039.2px;top:158.82px;font-size:21px;line-height:27px;color:#222;font-weight:normal;font-family:'Liberation Sans', Arial, sans-serif;letter-spacing:-1.510px;">SQL</span>
<span class="t" style="left:1107.7px;top:158.82px;font-size:21px;line-height:27px;color:#222;font-weight:normal;font-family:'Liberation Sans', Arial, sans-serif;letter-spacing:0.147px;">Statistics</span>
<span class="t" style="left:1224.7px;top:158.82px;font-size:21px;line-height:27px;color:#222;font-weight:normal;font-family:'Liberation Sans', Arial, sans-serif;letter-spacing:-0.272px;">Dependencies</span>
<span class="t" style="left:1386.7px;top:158.82px;font-size:21px;line-height:27px;color:#222;font-weight:normal;font-family:'Liberation Sans', Arial, sans-serif;letter-spacing:-0.227px;">Dependents</span>
<div style="left:1514px;top:149px;width:286px;height:47px;overflow:hidden;">
<svg style="left:15px;top:14px;" width="25" height="21" viewBox="0 0 25 21"><rect x="0.800" y="0.800" width="23.400" height="19.400" rx="2.200" fill="#fff" stroke="#326690" stroke-width="1.700"/><path d="M0.800 6.200H24.200M0.800 11H24.200M0.800 15.700H24.200M8.600 6.200V20M16.400 6.200V20" stroke="#326690" stroke-width="1.500"/><rect x="0.800" y="0.800" width="23.400" height="3.200" fill="#326690"/></svg>
<span class="t" style="left:45.2px;top:9.82px;font-size:21px;line-height:27px;color:#2f6696;font-weight:normal;font-family:'Liberation Sans', Arial, sans-serif;letter-spacing:-0.248px;">public._id_46413454_1cc</span>
<span class="t" style="left:282.4px;top:9.82px;font-size:21px;line-height:27px;color:#2f6696;font-weight:normal;font-family:'Liberation Sans', Arial, sans-serif;letter-spacing:-0.859px;">1_4257_87cf</span>
</div>
<div style="left:1514px;top:191px;width:286px;height:4px;background:#326690;"></div>
<svg style="left:1817px;top:162px;" width="15" height="20" viewBox="0 0 15 20"><path d="M12.300 1.700L3 10L12.300 18.300" fill="none" stroke="#222" stroke-width="3"/></svg>
<svg style="left:1853px;top:162px;" width="15" height="20" viewBox="0 0 15 20"><path d="M2.700 1.700L12 10L2.700 18.300" fill="none" stroke="#222" stroke-width="3"/></svg>
<div style="left:1884px;top:149px;width:36px;height:47px;overflow:hidden;">
<span class="t" style="left:-0.2px;top:9.82px;font-size:21px;line-height:27px;color:#2f6696;font-weight:normal;font-family:'Liberation Sans', Arial, sans-serif;letter-spacing:0.197px;">7cf_a4e9</span>
</div>
<div style="left:1884px;top:191px;width:36px;height:4px;background:#326690;"></div>
<svg style="left:1888px;top:164.5px;" width="16" height="15" viewBox="0 0 16 15"><path d="M1.800 1.500L14.200 13.500M14.200 1.500L1.800 13.500" stroke="#222" stroke-width="3.700"/></svg>
<div style="left:766px;top:196px;width:1154px;height:1px;background:#dde0e6;"></div>
<div style="left:766px;top:197px;width:1154px;height:89px;background:#ebeef3;"></div>
<div style="left:766px;top:197px;width:1154px;height:89px;overflow:hidden;">
<div class="btn" style="left:5px;top:3px;width:45px;height:42px;"></div>
<svg style="left:18.8px;top:15.8px;" width="17.2" height="18.2" viewBox="0 0 17 18" preserveAspectRatio="none"><path d="M0 2.72V13.28A7.1 2.72 0 0 0 14.2 13.28V2.72Z" fill="#222529"/><ellipse cx="7.1" cy="2.72" rx="7.1" ry="2.72" fill="#222529"/><path d="M0 3.42A7.1 2.72 0 0 0 14.2 3.42M0 8.24A7.1 2.72 0 0 0 14.2 8.24" fill="none" stroke="#fff" stroke-width="1.20"/><path d="M8.800 8.700L17 13.300L8.800 18Z" fill="#222529" stroke="#fff" stroke-width="1"/></svg>
<div class="btn dis" style="left:62px;top:2.3000000000000114px;width:126px;height:43.29999999999998px;"></div>
<div style="left:111px;top:2.3000000000000114px;width:1px;height:43.29999999999998px;background:#c3c8d2;"></div>
<div style="left:155px;top:2.3000000000000114px;width:1px;height:43.29999999999998px;background:#c3c8d2;"></div>
<svg style="left:75px;top:14.8px;" width="23.8" height="16.4" viewBox="0 0 24 17" preserveAspectRatio="none"><path d="M0 13.500V2A2 2 0 0 1 2 0H7.500L10 2.500H18A2 2 0 0 1 20 4.500V6H6.500A2.500 2.500 0 0 0 4.300 7.300Z" fill="#6b6b6b"/><path d="M6.800 7.500H23A1 1 0 0 1 23.900 9L20 15.800A2 2 0 0 1 18.200 17H1.500L5.400 8.500A1.800 1.800 0 0 1 6.800 7.500Z" fill="#6b6b6b"/></svg>
<svg style="left:124.2px;top:14px;" width="18.6" height="18.4" viewBox="0 0 18.5 18.5" preserveAspectRatio="none"><path d="M0 2A2 2 0 0 1 2 0H13.200L18.500 5.300V16.500A2 2 0 0 1 16.500 18.500H2A2 2 0 0 1 0 16.500Z" fill="#6b6b6b"/><rect x="2.600" y="2.600" width="9.300" height="4.300" fill="#f7f8fa"/><circle cx="9.250" cy="12.600" r="2.700" fill="#f7f8fa"/></svg>
<svg style="left:165px;top:18.5px;" width="12" height="7" viewBox="0 0 12 7" preserveAspectRatio="none"><path d="M1 1L6 5.800L11 1" fill="none" stroke="#6b6b6b" stroke-width="1.900"/></svg>
<div class="btn dis" style="left:199px;top:2.3000000000000114px;width:52px;height:43.29999999999998px;"></div>
<svg style="left:213px;top:14.8px;" width="25" height="21" viewBox="0 0 25 21" preserveAspectRatio="none"><rect width="25" height="21" rx="2" fill="#6b6b6b"/><rect x="2.0" y="4.6" width="6.200" height="4.100" fill="#f7f8fa"/><rect x="9.4" y="4.6" width="6.200" height="4.100" fill="#f7f8fa"/><rect x="16.8" y="4.6" width="6.200" height="4.100" fill="#f7f8fa"/><rect x="2.0" y="10.0" width="6.200" height="4.100" fill="#f7f8fa"/><rect x="9.4" y="10.0" width="6.200" height="4.100" fill="#f7f8fa"/><rect x="16.8" y="10.0" width="6.200" height="4.100" fill="#f7f8fa"/><rect x="2.0" y="15.4" width="6.200" height="4.100" fill="#f7f8fa"/><rect x="9.4" y="15.4" width="6.200" height="4.100" fill="#f7f8fa"/><rect x="16.8" y="15.4" width="6.200" height="4.100" fill="#f7f8fa"/><path d="M10.300 4.600V10H5.800L12.500 17.400L19.200 10H14.700V4.600Z" fill="#6b6b6b" stroke="#f7f8fa" stroke-width="0.800"/></svg>
<div class="btn dis" style="left:262px;top:2.3000000000000114px;width:80px;height:43.29999999999998px;"></div>
<div style="left:309px;top:2.3000000000000114px;width:1px;height:43.29999999999998px;background:#c3c8d2;"></div>
<svg style="left:275.6px;top:12.6px;" width="21.6" height="21.6" viewBox="0 0 21.5 21.5" preserveAspectRatio="none"><circle cx="8.700" cy="8.700" r="7.100" fill="none" stroke="#6b6b6b" stroke-width="3"/><path d="M13.800 13.800L20.300 20.300" stroke="#6b6b6b" stroke-width="3.300"/></svg>
<svg style="left:319.7px;top:18.5px;" width="12" height="7" viewBox="0 0 12 7" preserveAspectRatio="none"><path d="M1 1L6 5.800L11 1" fill="none" stroke="#6b6b6b" stroke-width="1.900"/></svg>
<div class="btn dis" style="left:354px;top:2.3000000000000114px;width:121px;height:43.29999999999998px;"></div>
<div style="left:399px;top:2.3000000000000114px;width:32px;height:43.29999999999998px;background:#fff;border:1px solid #c3c8d2;border-radius:0 0 0 0;"></div>
<svg style="left:367.3px;top:12.6px;" width="18.8" height="21" viewBox="0 0 19 21" preserveAspectRatio="none"><path d="M5 0H13.500V4.500A1 1 0 0 0 14.500 5.500H19V15A1.500 1.500 0 0 1 17.500 16.500H6.500A1.500 1.500 0 0 1 5 15Z" fill="#6b6b6b"/><path d="M14.800 0L19 4.200H14.800Z" fill="#6b6b6b"/><path d="M0 6A1.500 1.500 0 0 1 1.500 4.500H3.700V16.300A1.500 1.500 0 0 0 5.200 17.800H14V19.500A1.500 1.500 0 0 1 12.500 21H1.500A1.500 1.500 0 0 1 0 19.500Z" fill="#6b6b6b"/></svg>
<svg style="left:408px;top:18.5px;" width="12" height="7" viewBox="0 0 12 7" preserveAspectRatio="none"><path d="M1 1L6 5.800L11 1" fill="none" stroke="#222529" stroke-width="1.900"/></svg>
<svg style="left:443px;top:13px;" width="19" height="20.6" viewBox="0 0 19 21" preserveAspectRatio="none"><path d="M0 3.500A1.500 1.500 0 0 1 1.500 2H4.800A2.700 2.700 0 0 1 10.200 2H13.500A1.500 1.500 0 0 1 15 3.500V6.500H8.500A2 2 0 0 0 6.500 8.500V17.500H1.500A1.500 1.500 0 0 1 0 16Z" fill="#6b6b6b"/><circle cx="7.500" cy="2.400" r="1" fill="#f7f8fa"/><path d="M8 9.500A1.500 1.500 0 0 1 9.500 8H14.300V12A1 1 0 0 0 15.300 13H19V19.500A1.500 1.500 0 0 1 17.500 21H9.500A1.500 1.500 0 0 1 8 19.500Z" fill="#6b6b6b"/><path d="M15.600 8L19 11.500H15.600Z" fill="#6b6b6b"/></svg>
<div class="btn dis" style="left:486px;top:2.3000000000000114px;width:46px;height:43.29999999999998px;"></div>
<svg style="left:499.6px;top:13.2px;" width="18.8" height="20.4" viewBox="0 0 19 20.5" preserveAspectRatio="none"><path d="M0 2.800H5.300L6.300 0.800A1.300 1.300 0 0 1 7.500 0H11.500A1.300 1.300 0 0 1 12.700 0.800L13.700 2.800H19V4.800H0Z" fill="#6b6b6b"/><path d="M1.400 6.200H17.600L16.700 18.800A1.800 1.800 0 0 1 14.900 20.500H4.100A1.800 1.800 0 0 1 2.300 18.800Z" fill="#6b6b6b"/><path d="M5.600 8.500V18M9.500 8.500V18M13.400 8.500V18" stroke="#f7f8fa" stroke-width="1.500"/></svg>
<div class="btn dis" style="left:543px;top:2.3000000000000114px;width:68px;height:43.29999999999998px;"></div>
<svg style="left:555.8px;top:12.6px;" width="24" height="21.5" viewBox="0 0 24 21.5" preserveAspectRatio="none"><path d="M13 3.800H2.800A1.700 1.700 0 0 0 1.100 5.500V18.700A1.700 1.700 0 0 0 2.800 20.400H16A1.700 1.700 0 0 0 17.700 18.700V12.500" fill="none" stroke="#6b6b6b" stroke-width="2.200"/><path d="M17.200 2.700L21.500 7L11.500 17L6.800 17.600L7.300 12.700Z" fill="#6b6b6b"/><path d="M18.300 1.600L19.400 0.500A1.600 1.600 0 0 1 21.600 0.500L23.600 2.500A1.600 1.600 0 0 1 23.600 4.700L22.500 5.900Z" fill="#6b6b6b"/></svg>
<svg style="left:585px;top:18.5px;" width="12" height="7" viewBox="0 0 12 7" preserveAspectRatio="none"><path d="M1 1L6 5.800L11 1" fill="none" stroke="#6b6b6b" stroke-width="1.900"/></svg>
<div class="btn" style="left:622px;top:3px;width:101px;height:42px;"></div>
<div style="left:680px;top:3px;width:1px;height:42px;background:#c3c8d2;"></div>
<svg style="left:640.5px;top:12.7px;" width="22.7" height="21.8" viewBox="0 0 22.5 22" preserveAspectRatio="none"><path d="M1.200 0H21.300A1.100 1.100 0 0 1 22.100 1.900L14 10V21A1 1 0 0 1 12.400 21.800L9 19.400A1.200 1.200 0 0 1 8.500 18.500V10L0.400 1.900A1.100 1.100 0 0 1 1.200 0Z" fill="#222529"/></svg>
<svg style="left:694.8px;top:18px;" width="12.8" height="7.6" viewBox="0 0 12 7" preserveAspectRatio="none"><path d="M1 1L6 5.800L11 1" fill="none" stroke="#222529" stroke-width="1.900"/></svg>
<div style="left:734px;top:3.5px;width:145.5px;height:40.5px;background:#fff;border:1px solid #dfe2e8;border-radius:5px;"></div>
<span class="t" style="left:753.7px;top:10.00px;font-size:20.5px;line-height:27px;color:#222;font-weight:normal;font-family:'Liberation Sans', Arial, sans-serif;letter-spacing:-0.668px;">No limit</span>
<svg style="left:859.3px;top:19.8px;" width="13.2" height="8.2" viewBox="0 0 12 7" preserveAspectRatio="none"><path d="M1 1L6 5.800L11 1" fill="none" stroke="#222529" stroke-width="1.900"/></svg>
<div class="btn dis" style="left:891px;top:2.3000000000000114px;width:124px;height:43.29999999999998px;"></div>
<div style="left:935px;top:2.3000000000000114px;width:48px;height:43.29999999999998px;background:#fff;border:1px solid #c3c8d2;border-radius:0 0 0 0;"></div>
<div style="left:935px;top:2.3000000000000114px;width:1px;height:43.29999999999998px;background:#c3c8d2;"></div>
<div style="left:982px;top:2.3000000000000114px;width:1px;height:43.29999999999998px;background:#c3c8d2;"></div>
<svg style="left:905.3px;top:14.3px;" width="17.8" height="17.8" viewBox="0 0 18 18" preserveAspectRatio="none"><rect width="18" height="18" rx="1.800" fill="#666"/></svg>
<svg style="left:949.9px;top:12px;" width="18.5" height="21.7" viewBox="0 0 18.5 21.5" preserveAspectRatio="none"><path d="M0 1.500A1.500 1.500 0 0 1 2.300 0.300L17.700 9.500A1.500 1.500 0 0 1 17.700 12L2.300 21.200A1.500 1.500 0 0 1 0 20Z" fill="#222529"/></svg>
<svg style="left:992.3px;top:18.3px;" width="11.6" height="6.6" viewBox="0 0 12 7" preserveAspectRatio="none"><path d="M1 1L6 5.800L11 1" fill="none" stroke="#6b6b6b" stroke-width="1.900"/></svg>
<div class="btn dis" style="left:5px;top:47.30000000000001px;width:124px;height:47.69999999999999px;"></div>
<div style="left:49px;top:47.30000000000001px;width:1px;height:47.69999999999999px;background:#c3c8d2;"></div>
<div style="left:95px;top:47.30000000000001px;width:1px;height:47.69999999999999px;background:#c3c8d2;"></div>
<svg style="left:18.4px;top:57.8px;" width="18.6" height="21" viewBox="0 0 18.5 21" preserveAspectRatio="none"><path d="M5.800 1.700A1.700 1.700 0 0 1 9.200 1.700V9.500A1.500 1.500 0 0 1 12 9.200V10.200A1.500 1.500 0 0 1 14.800 10.200V11A1.500 1.500 0 0 1 17.700 11.500V15C17.700 17 16.500 18 16.500 19.500V21H6.500V19.500C5 18 3.500 16 1.200 13.500A1.800 1.800 0 0 1 3.800 11L5.800 13Z" fill="#6b6b6b"/><path d="M9.200 14V18.500M12 14V18.500M14.800 14V18.500" stroke="#f7f8fa" stroke-width="1"/></svg>
<svg style="left:62.6px;top:58.8px;" width="20.5" height="18.3" viewBox="0 0 20.5 18.5" preserveAspectRatio="none"><rect width="20.500" height="18.500" rx="2" fill="#6b6b6b"/><rect x="3.200" y="3.9" width="2.300" height="2.300" fill="#f7f8fa"/><rect x="7.200" y="4.1" width="10.300" height="1.900" fill="#f7f8fa"/><rect x="3.200" y="8.3" width="2.300" height="2.300" fill="#f7f8fa"/><rect x="7.200" y="8.5" width="10.300" height="1.900" fill="#f7f8fa"/><rect x="3.200" y="12.7" width="2.300" height="2.300" fill="#f7f8fa"/><rect x="7.200" y="12.9" width="10.300" height="1.900" fill="#f7f8fa"/></svg>
<svg style="left:106.2px;top:63.5px;" width="12" height="7" viewBox="0 0 12 7" preserveAspectRatio="none"><path d="M1 1L6 5.800L11 1" fill="none" stroke="#6b6b6b" stroke-width="1.900"/></svg>
<div class="btn dis" style="left:140px;top:47.30000000000001px;width:94.5px;height:47.69999999999999px;"></div>
<div style="left:187px;top:47.30000000000001px;width:1px;height:47.69999999999999px;background:#c3c8d2;"></div>
<svg style="left:154.8px;top:62px;" width="19" height="17.2" viewBox="0 0 19 17.5" preserveAspectRatio="none"><path d="M0 2.2950000000000004V11.205A7.25 2.2950000000000004 0 0 0 14.5 11.205V2.2950000000000004Z" fill="#6b6b6b"/><ellipse cx="7.25" cy="2.2950000000000004" rx="7.25" ry="2.2950000000000004" fill="#6b6b6b"/><path d="M0 2.995A7.25 2.2950000000000004 0 0 0 14.5 2.995M0 6.952500000000001A7.25 2.2950000000000004 0 0 0 14.5 6.952500000000001" fill="none" stroke="#f7f8fa" stroke-width="1.01"/><circle cx="13.400" cy="12" r="6.100" fill="#f7f8fa"/><circle cx="13.400" cy="12" r="5.200" fill="#6b6b6b"/><path d="M10.600 12L12.700 14.100L16.300 10.200" fill="none" stroke="#f7f8fa" stroke-width="1.500"/></svg>
<svg style="left:201.6px;top:62px;" width="19" height="17.2" viewBox="0 0 19 17.5" preserveAspectRatio="none"><path d="M0 2.2950000000000004V11.205A7.25 2.2950000000000004 0 0 0 14.5 11.205V2.2950000000000004Z" fill="#6b6b6b"/><ellipse cx="7.25" cy="2.2950000000000004" rx="7.25" ry="2.2950000000000004" fill="#6b6b6b"/><path d="M0 2.995A7.25 2.2950000000000004 0 0 0 14.5 2.995M0 6.952500000000001A7.25 2.2950000000000004 0 0 0 14.5 6.952500000000001" fill="none" stroke="#f7f8fa" stroke-width="1.01"/><circle cx="13.400" cy="12" r="6.100" fill="#f7f8fa"/><circle cx="13.400" cy="12" r="5.200" fill="#6b6b6b"/><path d="M10 11.800H14.500A2 2 0 0 1 14.500 15.500H13" fill="none" stroke="#f7f8fa" stroke-width="1.400"/><path d="M12.300 9.300L9.600 11.800L12.300 14.300Z" fill="#f7f8fa"/></svg>
<div class="btn" style="left:246.5px;top:47.30000000000001px;width:64.5px;height:47.69999999999999px;"></div>
<svg style="left:259.4px;top:58.8px;" width="21.5" height="18" viewBox="0 0 21.5 18" preserveAspectRatio="none"><path d="M12.200 0.600A1.800 1.800 0 0 1 14.800 0.600L20.900 6.700A1.800 1.800 0 0 1 20.900 9.300L14.300 15.900H21V18H6.500L0.600 12.100A1.800 1.800 0 0 1 0.600 9.500Z" fill="#222529"/><path d="M5.800 8.300L11.800 14.300L10.200 15.900H7.400L3.300 11.800A1 1 0 0 1 3.300 10.800Z" fill="#fff"/></svg>
<svg style="left:285.5px;top:64.5px;" width="11.8" height="6.8" viewBox="0 0 12 7" preserveAspectRatio="none"><path d="M1 1L6 5.800L11 1" fill="none" stroke="#222529" stroke-width="1.900"/></svg>
<div class="btn" style="left:322.5px;top:47.30000000000001px;width:47.0px;height:47.69999999999999px;"></div>
<svg style="left:335.6px;top:57.8px;" width="21.5" height="20.5" viewBox="0 0 21.5 20.5" preserveAspectRatio="none"><path d="M8.600 0H12.900A1 1 0 0 1 13.900 1V7.500H17.600A0.800 0.800 0 0 1 18.200 8.900L11.400 15.700A0.900 0.900 0 0 1 10.100 15.700L3.300 8.900A0.800 0.800 0 0 1 3.900 7.500H7.600V1A1 1 0 0 1 8.600 0Z" fill="#222529"/><path d="M1 14.300H6L9.200 17.500A2.200 2.200 0 0 0 12.300 17.500L15.500 14.300H20.500A1 1 0 0 1 21.500 15.300V19.500A1 1 0 0 1 20.500 20.500H1A1 1 0 0 1 0 19.500V15.300A1 1 0 0 1 1 14.300Z" fill="#222529"/><circle cx="16.300" cy="18.300" r="0.800" fill="#fff"/><circle cx="18.900" cy="18.300" r="0.800" fill="#fff"/></svg>
</div>
<div style="left:766px;top:286px;width:1154px;height:48px;background:#fff;"></div>
<span class="t" style="left:779.8px;top:295.52px;font-size:21px;line-height:27px;color:#2f6696;font-weight:normal;font-family:'Liberation Sans', Arial, sans-serif;letter-spacing:-0.366px;">Query Editor</span>
<span class="t" style="left:923.2px;top:295.52px;font-size:21px;line-height:27px;color:#222;font-weight:normal;font-family:'Liberation Sans', Arial, sans-serif;letter-spacing:-0.143px;">Query History</span>
<div style="left:766px;top:328px;width:143px;height:4px;background:#326690;"></div>
<div style="left:766px;top:333px;width:1154px;height:1px;background:#dde0e6;"></div>
<div style="left:1634px;top:286px;width:1px;height:333px;background:#dde0e6;"></div>
<span class="t" style="left:1650.2px;top:295.52px;font-size:21px;line-height:27px;color:#222;font-weight:normal;font-family:'Liberation Sans', Arial, sans-serif;letter-spacing:-0.219px;">Scratch Pad</span>
<svg style="left:1887px;top:302px;" width="16" height="15" viewBox="0 0 16 15"><path d="M1.800 1.500L14.200 13.500M14.200 1.500L1.800 13.500" stroke="#222" stroke-width="3.500"/></svg>
<div style="left:766px;top:334px;width:61px;height:285px;background:#f3f5f9;"></div>
<div style="left:827px;top:334px;width:807px;height:285px;background:#f9fafc;"></div>
<span class="t" style="left:793px;top:344.19px;font-size:20.3px;line-height:26px;color:#8c8c8c;font-weight:normal;font-family:'Liberation Mono', monospace;letter-spacing:0;">1</span>
<span class="t" style="left:792px;top:374.39px;font-size:20.3px;line-height:26px;color:#8c8c8c;font-weight:normal;font-family:'Liberation Mono', monospace;letter-spacing:0;">2</span>
<span class="t" style="left:833.3px;top:344.89px;font-size:20.3px;line-height:26px;color:#93b6da;font-weight:normal;font-family:'Liberation Mono', monospace;letter-spacing:0.427px;"><b style="color:#cb87c7">SELECT</b> <span style="color:#8f8f8f;position:relative;top:4px;">*</span> <b style="color:#cb87c7">FROM</b> <b style="color:#cb87c7">public</b><b style="color:#7fa6cf">.</b>_id_46413454_1cc1_4257_87cf_a4e9a562df04</span>
<div style="left:1635px;top:334px;width:285px;height:285px;background:#fff;"></div>
<div style="left:766px;top:619px;width:1154px;height:1px;background:#dde0e6;"></div>
<div style="left:766px;top:620px;width:1154px;height:47px;background:#fff;"></div>
<span class="t" style="left:780.0px;top:629.92px;font-size:21px;line-height:27px;color:#2f6696;font-weight:normal;font-family:'Liberation Sans', Arial, sans-serif;letter-spacing:-0.203px;">Data Output</span>
<span class="t" style="left:921.5px;top:629.92px;font-size:21px;line-height:27px;color:#222;font-weight:normal;font-family:'Liberation Sans', Arial, sans-serif;letter-spacing:-0.270px;">Explain</span>
<span class="t" style="left:1018.8px;top:629.92px;font-size:21px;line-height:27px;color:#222;font-weight:normal;font-family:'Liberation Sans', Arial, sans-serif;letter-spacing:0.035px;">Messages</span>
<span class="t" style="left:1145.2px;top:629.92px;font-size:21px;line-height:27px;color:#222;font-weight:normal;font-family:'Liberation Sans', Arial, sans-serif;letter-spacing:0.355px;">Notifications</span>
<div style="left:766px;top:662px;width:141px;height:4px;background:#326690;"></div>
<div style="left:766px;top:667px;width:1154px;height:1px;background:#dde0e6;"></div>
<div style="left:766px;top:668px;width:1154px;height:59px;background:#fff;"></div>
<div style="left:766px;top:727px;width:1154px;height:1px;background:#dde0e6;"></div>
<div style="left:766px;top:728px;width:1154px;height:212px;background:#ebeef3;"></div>
<div style="left:766px;top:940px;width:1154px;height:6px;background:#fff;"></div>
<div style="left:766px;top:728px;width:132.5px;height:37.5px;background:#fff;border-right:1px solid #dde0e6;border-bottom:1px solid #dde0e6;"></div>
<div style="left:811px;top:668px;width:1px;height:97px;background:#dde0e6;"></div>
<div style="left:898px;top:668px;width:1px;height:59px;background:#dde0e6;"></div>
<svg style="left:789px;top:706px;" width="15.5" height="15" viewBox="0 0 15.5 15"><path d="M15.500 0V15H0Z" fill="#7d7d7d"/></svg>
<span class="t" style="left:820.5px;top:673.42px;font-size:19px;line-height:25px;color:#222;font-weight:bold;font-family:'Liberation Sans', Arial, sans-serif;letter-spacing:-0.730px;">size</span>
<span class="t" style="left:820.5px;top:696.92px;font-size:19px;line-height:25px;color:#222;font-weight:normal;font-family:'Liberation Sans', Arial, sans-serif;letter-spacing:-0.031px;">text</span>
<svg style="left:872px;top:688.8px;" width="16.5" height="18" viewBox="0 0 16.5 18"><rect x="0" y="7.800" width="16.500" height="10.200" rx="1.800" fill="#222"/><path d="M3.700 8V5.200A4.500 4.500 0 0 1 12.800 5.200V8" fill="none" stroke="#222" stroke-width="2.500"/></svg>
<span class="t" style="left:784.6px;top:733.76px;font-size:18.6px;line-height:24px;color:#222;font-weight:normal;font-family:'Liberation Sans', Arial, sans-serif;letter-spacing:0;">1</span>
<span class="t" style="left:820.6px;top:733.76px;font-size:18.6px;line-height:24px;color:#222;font-weight:normal;font-family:'Liberation Sans', Arial, sans-serif;letter-spacing:0;">5</span>
<div style="left:1212px;top:871px;width:692px;height:58px;background:#dbecdb;border:1px solid #3c9a3c;border-radius:6px;"></div>
<svg style="left:1237px;top:889.5px;" width="22.5" height="18" viewBox="0 0 22.5 18"><path d="M2 9.500L8.300 15.500L20.500 2.700" fill="none" stroke="#2b8a2b" stroke-width="4.200"/></svg>
<span class="t" style="left:1271.2px;top:885.88px;font-size:22px;line-height:29px;color:#222;font-weight:normal;font-family:'Liberation Sans', Arial, sans-serif;letter-spacing:-0.413px;">Successfully run. Total query runtime: 146 msec. 1 rows affected.</span>
</body></html>
